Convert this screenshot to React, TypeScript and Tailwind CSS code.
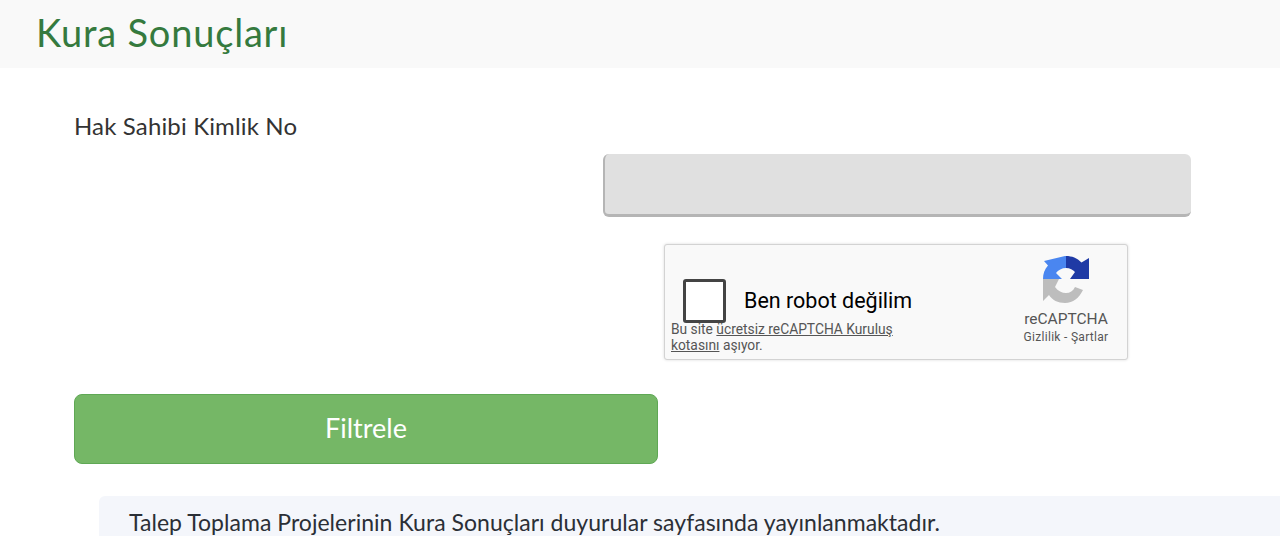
function RecaptchaLogo() {
  return (
    <svg width="46" height="47" viewBox="0 0 46 47" className="block">
      <path d="M0 23H16L12 31C15 35 19 37 23 37C27 37 30 35 32 31L40 34C36 42 30 47 22 47C15 47 9 44 6 39L0 45Z" fill="#bdbdbd" />
      <path d="M0 23C0 18 1.500 13 5 9.500L1 5L22 0H23V12C19 12 15 14 13 17L19 23Z" fill="#4a86f0" />
      <path d="M23 0C29 0 34 2 38.500 6.500L46 2V23H27L32 16C30 14 27 12 23 12Z" fill="#1f3aa5" />
    </svg>
  );
}

export default function App() {
  return (
    <div className="h-[536px] overflow-hidden bg-white font-['Lato',sans-serif]">
      {/* Page title */}
      <div className="flex h-[68px] items-center bg-[#f9f9f9] pl-9">
        <h1 className="-mt-[5px] text-[38px] leading-none tracking-[0.8px] text-[#357a3e]">Kura Sonuçları</h1>
      </div>

      <div className="pl-[74px]">
        <label className="mt-[43px] block text-[24px] leading-[30px] tracking-[0.15px] text-[#333333]">Hak Sahibi Kimlik No</label>

        <div className="mt-[13px] ml-[529px] h-[63px] w-[588px] rounded-md border-b-[3px] border-l-2 border-[#b5b5b5] bg-[#e0e0e0]" />

        {/* Captcha box */}
        <div className="mt-[27px] ml-[590px] flex h-[116px] w-[464px] justify-between rounded-[3px] border border-[#d3d3d3] bg-[#f9f9f9] font-['Roboto',sans-serif] shadow-[0_0_3px_rgba(0,0,0,0.15)]">
          <div className="w-[240px] pl-[6px]">
            <div className="mt-[34px] flex items-center">
              <div className="ml-[12px] h-[44px] w-[43px] shrink-0 rounded-[3px] border-[3px] border-[#444444] bg-white" />
              <span className="ml-[18px] text-[21.500px] leading-none whitespace-nowrap text-black">Ben robot değilim</span>
            </div>
            <div className="-mt-[2px] text-[13.800px] leading-[16px] text-[#555555]">
              <p>Bu site <span className="underline">ücretsiz reCAPTCHA Kuruluş</span></p>
              <p><span className="underline">kotasını</span> aşıyor.</p>
            </div>
          </div>
          <div className="mr-[8px] flex w-[104px] flex-col items-center pt-[11px] pr-[2px]">
            <RecaptchaLogo />
            <div className="mt-[7px] text-[15.500px] leading-[18px] text-[#555555]">reCAPTCHA</div>
            <div className="mt-[1px] text-[12px] leading-[16px] tracking-[0.3px] whitespace-nowrap text-[#555555]">Gizlilik - Şartlar</div>
          </div>
        </div>

        <button className="mt-[34px] block h-[70px] w-[584px] rounded-lg border border-[#5fa855] bg-[#75b766] pb-[2px] text-[27px] text-white">Filtrele</button>

        {/* Notice */}
        <div className="mt-[32px] ml-[25px] rounded-tl-md bg-[#f4f6fb] pt-[11px] pl-[30px] text-[23px] leading-[30px] tracking-[0.03px] text-[#2b2f36]">
          Talep Toplama Projelerinin Kura Sonuçları duyurular sayfasında yayınlanmaktadır.
        </div>
      </div>
    </div>
  );
}
